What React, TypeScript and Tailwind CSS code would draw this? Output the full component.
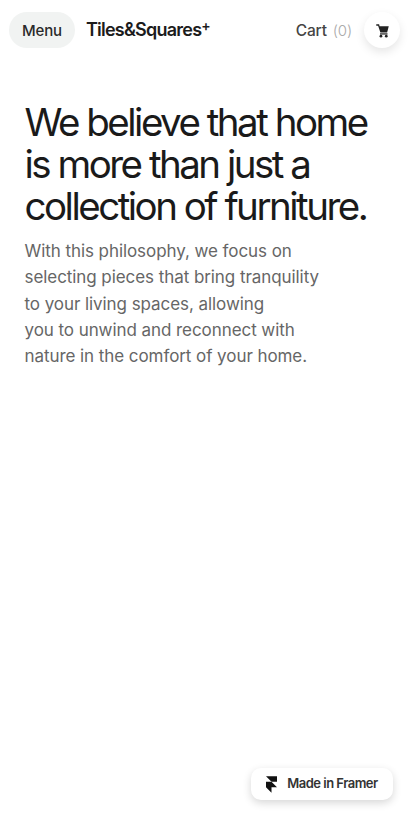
import React from 'react';

function CartIcon() {
  return (
    <svg viewBox="0 0 24 24" className="w-[15px] h-[15px] text-[#222]" fill="currentColor">
      <path d="M2 2h4.6l.7 3H22l-2.6 10H8.6L5 4.2H2z" />
      <path d="M8 16.5h12v2H8z" />
      <circle cx="9.5" cy="21" r="2.2" />
      <circle cx="18" cy="21" r="2.2" />
    </svg>
  );
}

function FramerIcon() {
  return (
    <svg viewBox="0 0 14 21" className="w-[11px] h-[17px] text-[#111]" fill="currentColor">
      <path d="M0 0h14v7H7z" />
      <path d="M0 7h7l7 7H7v7l-7-7z" />
    </svg>
  );
}

export default function App() {
  return (
    <div className="relative min-h-[821px] bg-white font-['Inter',sans-serif] overflow-hidden">
      {/* Header */}
      <div className="flex items-center justify-between pl-[9px] pr-[12px] pt-[12px]">
        <div className="flex items-center gap-[11px]">
          <div className="flex items-center justify-center w-[66px] h-[36px] rounded-full bg-[#f1f3f2] text-[15px] font-medium text-[#2a2a2a] tracking-[-0.01em]">
            <span className="relative top-[1px]">Menu</span>
          </div>
          <div className="relative -top-[1px] text-[18px] font-semibold text-[#1c1c1c] tracking-[-0.043em]">
            Tiles&Squares<sup className="text-[14px] -top-[5px]">+</sup>
          </div>
        </div>
        <div className="flex items-center gap-[12px]">
          <div className="relative top-[1px] text-[15.5px] font-medium text-[#444] tracking-[-0.01em]">
            Cart <span className="ml-[2px] font-light text-[15px] text-[#aaa]">(0)</span>
          </div>
          <div className="flex items-center justify-center w-[36px] h-[36px] rounded-full bg-white shadow-[0_4px_10px_rgba(0,0,0,0.1)]">
            <CartIcon />
          </div>
        </div>
      </div>

      {/* Hero text */}
      <div className="pl-[24.5px] pt-[53px]">
        <h1 className="text-[38.5px] leading-[42px] font-normal text-[#1a1a1a] tracking-[-0.065em] whitespace-nowrap">
          We believe that home
          <br />
          is more than just a
          <br />
          collection of furniture.
        </h1>
        <p className="mt-[11px] text-[17px] leading-[26.25px] text-[#666] tracking-[-0.004em] whitespace-nowrap">
          With this philosophy, we focus on
          <br />
          selecting pieces that bring tranquility
          <br />
          to your living spaces, allowing
          <br />
          you to unwind and reconnect with
          <br />
          nature in the comfort of your home.
        </p>
      </div>

      {/* Framer badge */}
      <div className="absolute left-[251px] top-[768px] flex items-center justify-center gap-[10px] w-[142px] h-[32px] rounded-[10px] bg-white shadow-[0_3px_8px_rgba(0,0,0,0.16)]">
        <FramerIcon />
        <span className="text-[13px] font-semibold text-[#333] tracking-[-0.04em]">Made in Framer</span>
      </div>
    </div>
  );
}
